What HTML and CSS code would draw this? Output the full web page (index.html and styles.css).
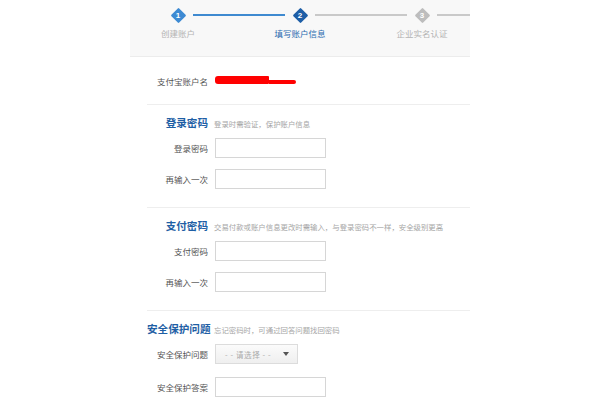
FILE: index.html
```html
<!DOCTYPE html>
<html lang="zh-CN">
<head>
<meta charset="utf-8">
<title>填写账户信息</title>
<link rel="stylesheet" href="styles.css">
</head>
<body>
<div class="page">
  <div class="steps-bar">
    <div class="steps">
      <div class="step done">
        <div class="track"><span class="half none"></span><span class="dia"><b>1</b></span><span class="half blue"></span></div>
        <div class="step-label">创建账户</div>
      </div>
      <div class="step current">
        <div class="track"><span class="half blue"></span><span class="dia"><b>2</b></span><span class="half gray"></span></div>
        <div class="step-label">填写账户信息</div>
      </div>
      <div class="step todo">
        <div class="track"><span class="half gray"></span><span class="dia"><b>3</b></span><span class="half gray"></span></div>
        <div class="step-label">企业实名认证</div>
      </div>
    </div>
  </div>

  <div class="account-row">
    <span class="lbl">支付宝账户名</span>
    <span class="redact"><span class="blob-a"></span><span class="blob-b"></span></span>
  </div>

  <section class="section">
    <div class="head-row"><h2 class="lbl head">登录密码</h2><span class="desc">登录时需验证，保护账户信息</span></div>
    <div class="row"><span class="lbl">登录密码</span><span class="input"></span></div>
    <div class="row"><span class="lbl">再输入一次</span><span class="input"></span></div>
  </section>

  <section class="section">
    <div class="head-row"><h2 class="lbl head">支付密码</h2><span class="desc">交易付款或账户信息更改时需输入，与登录密码不一样，安全级别更高</span></div>
    <div class="row"><span class="lbl">支付密码</span><span class="input"></span></div>
    <div class="row"><span class="lbl">再输入一次</span><span class="input"></span></div>
  </section>

  <section class="section last">
    <div class="head-row"><h2 class="lbl head">安全保护问题</h2><span class="desc">忘记密码时，可通过回答问题找回密码</span></div>
    <div class="row"><span class="lbl">安全保护问题</span><span class="select"><span class="sel-text">- - 请选择 - -</span><span class="caret"></span></span></div>
    <div class="row gap2"><span class="lbl">安全保护答案</span><span class="input"></span></div>
  </section>
</div>
</body>
</html>
```

FILE: styles.css
```css
* { box-sizing: border-box; }
html, body { margin: 0; padding: 0; background: #fff; }
body {
  font-family: "Noto Sans CJK SC", "Noto Sans", "Liberation Sans", sans-serif;
  color: #555;
  width: 600px;
  height: 400px;
  overflow: hidden;
}
.page {
  margin-left: 130px;
  width: 340px;
}

/* steps */
.steps-bar {
  height: 57px;
  background: #f8f8f8;
  border-bottom: 1px solid #ececec;
  overflow: hidden;
}
.steps {
  display: flex;
  margin-left: -13px;
  padding-top: 7px;
}
.step {
  width: 122px;
  flex: none;
  display: flex;
  flex-direction: column;
  align-items: center;
}
.track {
  width: 100%;
  height: 16px;
  display: flex;
  align-items: center;
}
.half { flex: 1; height: 2px; }
.half.blue { background: #3f8ad0; }
.half.gray { background: #c9c9c9; }
.half.none { background: transparent; }
.dia {
  width: 11px;
  height: 11px;
  margin: 0 9.5px;
  transform: rotate(45deg);
  display: flex;
  align-items: center;
  justify-content: center;
  border-radius: 1px;
}
.dia b {
  transform: rotate(-45deg);
  color: #fff;
  font-family: "Liberation Sans", sans-serif;
  font-weight: bold;
  font-size: 8px;
  line-height: 8px;
}
.done .dia { background: #3d8ad3; }
.current .dia { background: #1e5ea6; }
.todo .dia { background: #bdbdbd; }
.step-label {
  margin-top: 5px;
  font-size: 8.5px;
  line-height: 10px;
  color: #b3b3b3;
}
.current .step-label { color: #2a6aaf; }

/* rows */
.lbl {
  width: 61px;
  flex: none;
  text-align: right;
  font-size: 8.5px;
  line-height: 10px;
  color: #555;
  margin: 0 7px 0 0;
  white-space: nowrap;
}
.account-row {
  height: 47px;
  display: flex;
  align-items: center;
  padding-left: 17px;
}
.redact {
  display: flex;
  align-items: flex-end;
  flex: none;
  height: 9px;
  margin-top: -2px;
}
.blob-a {
  width: 54px;
  height: 8px;
  background: #ff0000;
  border-radius: 3px 1px 1px 3px;
}
.blob-b {
  width: 27px;
  height: 4px;
  background: #ff0000;
  border-radius: 0 3px 3px 0;
}

.section {
  margin-left: 17px;
  border-top: 1px solid #eeeeee;
  padding: 12px 0 18px;
}
.head-row {
  display: flex;
  align-items: baseline;
  height: 12px;
}
.lbl.head {
  font-size: 10.6px;
  line-height: 12px;
  font-weight: bold;
  color: #1f5fa5;
  margin-right: 6px;
}
.desc {
  font-size: 7.4px;
  color: #a6a6a6;
  white-space: nowrap;
}
.row {
  display: flex;
  align-items: center;
  margin-top: 11px;
}
.head-row + .row { margin-top: 9px; }
.row.gap2 { margin-top: 13px; }
.input {
  width: 111px;
  height: 20px;
  border: 1px solid #d6d6d6;
  background: #fff;
}
.select {
  width: 83px;
  height: 20px;
  border: 1px solid #dcdcdc;
  background: linear-gradient(#fbfbfb, #efefef);
  display: flex;
  align-items: center;
  padding: 0 8px 0 9px;
}
.sel-text {
  font-size: 7.5px;
  color: #aaa;
  white-space: pre;
  letter-spacing: 0.6px;
}
.caret {
  margin-left: auto;
  width: 0;
  height: 0;
  border-left: 3.5px solid transparent;
  border-right: 3.5px solid transparent;
  border-top: 4px solid #555;
}
```
